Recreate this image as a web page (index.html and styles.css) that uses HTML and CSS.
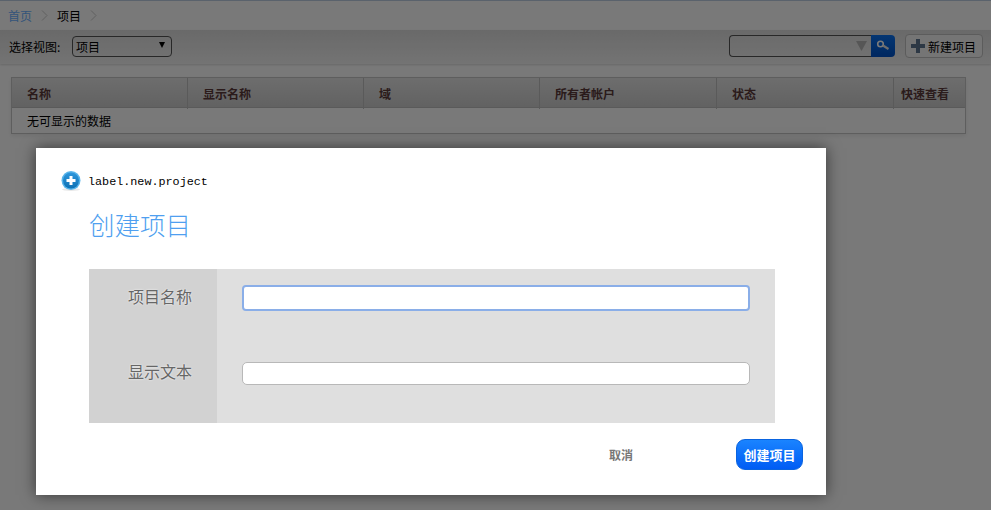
FILE: index.html
```html
<!DOCTYPE html>
<html lang="zh">
<head>
<meta charset="utf-8">
<title>项目</title>
<link rel="stylesheet" href="styles.css">
</head>
<body>
<div class="page">
  <nav class="crumbs">
    <a class="crumb-link">首页</a>
    <svg class="chev" viewBox="0 0 7 11"><path d="M1 .5 6 5.5 1 10.5" fill="none" stroke="#c8c8c8" stroke-width="1"/></svg>
    <span>项目</span>
    <svg class="chev" viewBox="0 0 7 11"><path d="M1 .5 6 5.5 1 10.5" fill="none" stroke="#c8c8c8" stroke-width="1"/></svg>
  </nav>
  <div class="toolbar">
    <span class="view-label">选择视图:</span>
    <div class="select"><span>项目</span><svg class="select-arrow" viewBox="0 0 6 6"><path d="M0 0H6L3 6Z" fill="#000"/></svg></div>
    <div class="spacer"></div>
    <div class="search">
      <div class="search-box"><svg class="search-arrow" viewBox="0 0 11 10"><path d="M0 0H11L5.500 10Z" fill="#b4b4b4"/></svg></div>
      <div class="search-btn"><svg viewBox="0 0 14 12" width="14" height="12"><circle cx="4.500" cy="4" r="2.800" fill="none" stroke="#fff" stroke-width="1.600"/><path d="M7 5.500 12.500 9" stroke="#e4e4e4" stroke-width="2.200"/></svg></div>
    </div>
    <button class="add-btn"><svg viewBox="0 0 14 14" width="14" height="14"><path d="M5 0H9V5H14V9H9V14H5V9H0V5H5Z" fill="#5f7690"/></svg><span>新建项目</span></button>
  </div>
  <div class="table">
    <div class="thead">
      <div class="th">名称</div>
      <div class="th">显示名称</div>
      <div class="th">域</div>
      <div class="th">所有者帐户</div>
      <div class="th">状态</div>
      <div class="th th-last">快速查看</div>
    </div>
    <div class="empty">无可显示的数据</div>
  </div>
</div>
<div class="overlay"></div>
<section class="dialog">
  <header class="dialog-head">
    <svg class="plus-icon" viewBox="0 0 20 20" width="20" height="20">
      <defs><linearGradient id="g" x1="0" y1="0" x2="0" y2="1"><stop offset="0" stop-color="#2f97dc"/><stop offset="1" stop-color="#0b70b4"/></linearGradient></defs>
      <ellipse cx="10" cy="18.500" rx="9" ry="1.500" fill="#e8e8e8"/>
      <circle cx="10" cy="9.500" r="9.500" fill="#58b4ea"/>
      <circle cx="10" cy="9.500" r="8" fill="url(#g)"/>
      <path d="M8.500 5H11.500V8H14.500V11H11.500V14H8.500V11H5.500V8H8.500Z" fill="#fff"/>
    </svg>
    <span class="dialog-label">label.new.project</span>
  </header>
  <h1 class="dialog-title">创建项目</h1>
  <form class="form">
    <label class="form-label">项目名称</label>
    <div class="form-field"><div class="input input-focus"></div></div>
    <label class="form-label">显示文本</label>
    <div class="form-field"><div class="input"></div></div>
  </form>
  <footer class="dialog-foot">
    <span class="cancel">取消</span>
    <button class="create">创建项目</button>
  </footer>
</section>
</body>
</html>
```
FILE: styles.css
```css
* { box-sizing: border-box; }
html, body { margin: 0; height: 100%; overflow: hidden; }
body { background: #fff; font-family: "Noto Sans CJK SC", "Liberation Sans", sans-serif; font-size: 12px; color: #000; position: relative; }
.page { height: 510px; background: #fdfdfd; }
.crumbs { height: 30px; display: flex; align-items: center; gap: 9px; padding: 1px 0 0 8px; }
.crumb-link { color: #6cb0ff; }
.chev { width: 7px; height: 11px; }
.toolbar { height: 34px; display: flex; align-items: center; padding: 0 8px 2px 9px; background: linear-gradient(#dcdcdc, #f2f2f2); box-shadow: 0 1px 2px rgba(0,0,0,.15); }
.view-label { width: 63px; }
.select { width: 100px; height: 21px; border: 1px solid #555; border-radius: 4px; display: flex; align-items: center; justify-content: space-between; padding: 0 6px 0 3px; }
.select-arrow { width: 6px; height: 6px; margin-top: -2px; }
.spacer { flex: 1; }
.search { display: flex; height: 22px; width: 166px; margin-right: 10px; }
.search-box { flex: 1; border: 1px solid #555; border-right: 0; border-radius: 4px 0 0 4px; display: flex; align-items: center; justify-content: flex-end; padding-right: 4px; }
.search-arrow { width: 11px; height: 10px; }
.search-btn { width: 24px; background: linear-gradient(#0a72f0, #0052c8); border-radius: 0 4px 4px 0; display: flex; align-items: center; justify-content: center; }
.add-btn { width: 78px; height: 24px; border: 1px solid #c0c0c0; border-radius: 4px; background: #f4f4f4; display: flex; align-items: center; gap: 3px; padding: 0 0 0 5px; font: inherit; color: #000; }
.table { margin: 13px 25px 0 11px; border: 1px solid #c4c4c4; height: 57px; box-shadow: 0 2px 4px rgba(0,0,0,.08); }
.thead { height: 30px; display: grid; grid-template-columns: 176px 176px 176px 177px 177px 1fr; background: linear-gradient(#e4e4e4, #cdcdcd); border-bottom: 1px solid #bcbcbc; }
.th { padding: 0 0 0 15px; font-weight: 700; color: #5a3a3a; line-height: 31px; border-right: 1px solid #bcbcbc; }
.th-last { padding-left: 7px; border-right: 0; }
.empty { padding-left: 15px; line-height: 25px; }
.overlay { position: absolute; inset: 0; background: rgba(0,0,0,.52); border-top: 1px solid #5a626c; }
.dialog { position: absolute; left: 36px; top: 148px; width: 790px; height: 347px; background: #fff; box-shadow: 0 0 14px rgba(0,0,0,.55); padding: 23px 23px 0 25px; }
.dialog-head { display: flex; align-items: center; gap: 7px; height: 20px; }
.dialog-label { font-family: "Liberation Mono", monospace; font-size: 11.750px; color: #000; padding-top: 2px; }
.dialog-title { margin: 15px 0 0 28px; font-size: 25.500px; font-weight: 300; line-height: 36px; color: #4f9ff0; height: 36px; }
.form { margin: 27px 28px 0 28px; display: grid; grid-template-columns: 128px 1fr; grid-template-rows: 75px 79px; background: #dfdfdf; }
.form-label { background: #d2d2d2; font-size: 16px; line-height: 24px; color: #666; text-align: right; padding: 15px 25px 0 0; text-shadow: 0 0 2px #fff; }
.form-field { padding: 18px 25px 0; }
.input { height: 23px; background: #fff; border: 1px solid #b8b8b8; border-radius: 5px; }
.input-focus { height: 26px; margin-top: -2px; border: 2px solid #8aaee8; border-radius: 4px; }
.dialog-foot { margin-top: 16px; display: flex; align-items: center; justify-content: flex-end; height: 31px; }
.cancel { font-weight: 700; color: #777; margin-right: 103px; }
.create { width: 67px; height: 31px; border: 1px solid #0a64e0; border-radius: 9px; background: linear-gradient(#1a84ff, #005cf4); color: #fff; font: 700 13px "Noto Sans CJK SC", sans-serif; padding: 0; }
```
